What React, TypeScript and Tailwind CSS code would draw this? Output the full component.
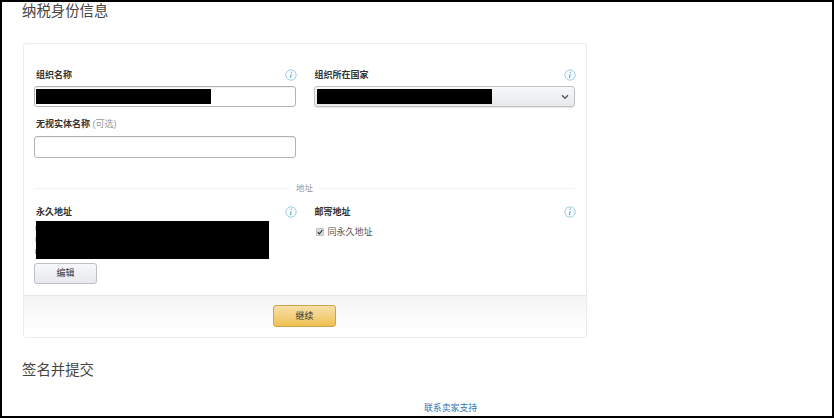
const font = { fontFamily: '"Liberation Sans", "Noto Sans CJK SC", sans-serif' };

function Info() {
  return (
    <svg width="12" height="12" viewBox="0 0 12 12" className="shrink-0 -mr-[1px]">
      <circle cx="6" cy="6" r="5.2" fill="#f6fbfd" stroke="#a6cde0" strokeWidth="1" />
      <path d="M6.4 2.8v1.1M6.1 5.2 5.5 9" stroke="#5a9abd" strokeWidth="1" fill="none" />
    </svg>
  );
}

function LabelInfo({ text, left }: { text: string; left: boolean }) {
  return (
    <div className="flex items-center justify-between h-[12px]">
      <span className={left ? "ml-[2px] text-[9px] font-bold leading-[12px] text-[#333]" : "ml-[1px] text-[9px] font-bold leading-[12px] text-[#333]"}>
        {text}
      </span>
      <Info />
    </div>
  );
}

export default function App() {
  return (
    <div
      style={font}
      className="w-[834px] h-[418px] bg-white border-t-2 border-l-2 border-r-2 border-b-2 border-black overflow-hidden flex flex-col pl-[21px] box-border"
    >
      <h1 className="-ml-[1px] text-[14.4px] font-normal leading-[18px] text-[#444]">纳税身份信息</h1>
      <div className="mt-[23px] w-[564px] h-[295px] border border-[#ececec] rounded-[3px] flex flex-col shrink-0">
        <div className="h-[251px] px-[10px] pt-[25px] shrink-0">
          <div className="grid grid-cols-2 gap-x-[18px] w-[541px]">
            <div className="flex flex-col">
              <LabelInfo text="组织名称" left />
              <div className="mt-[5px] h-[21px] border border-[#b2b2b2] rounded-[3px] bg-white p-[1px] shadow-[inset_0_1px_1px_rgba(0,0,0,0.06)]">
                <div className="w-[175px] h-[15px] bg-black mt-[1px]" />
              </div>
              <div className="mt-[11px] h-[12px] flex items-center">
                <span className="ml-[2px] text-[9px] font-bold leading-[12px] text-[#333]">
                  无视实体名称
                  <span className="font-normal text-[#999]"> (可选)</span>
                </span>
              </div>
              <div className="mt-[6px] h-[22px] border border-[#b2b2b2] rounded-[3px] bg-white shadow-[inset_0_1px_1px_rgba(0,0,0,0.06)]" />
            </div>
            <div className="flex flex-col">
              <LabelInfo text="组织所在国家" left={false} />
              <div className="mt-[5px] h-[21px] border border-[#c2c2c2] rounded-[3px] bg-gradient-to-b from-[#f7f8fa] to-[#e7e9ec] flex items-center justify-between pl-[2px] pr-[5px] shadow-[0_1px_1px_rgba(0,0,0,0.1)]">
                <div className="w-[175px] h-[15px] bg-black" />
                <svg width="8" height="6" viewBox="0 0 8 6">
                  <path d="M1 1.2 4 4.2 7 1.2" stroke="#555" strokeWidth="1.4" fill="none" />
                </svg>
              </div>
            </div>
          </div>
          <div className="mt-[23px] w-[541px] flex items-center gap-[6px] h-[14px]">
            <div className="flex-1 h-[1px] bg-[#f2f2f2]" />
            <span className="text-[8.5px] leading-[14px] text-[#999]">地址</span>
            <div className="flex-1 h-[1px] bg-[#f2f2f2]" />
          </div>
          <div className="mt-[11px] grid grid-cols-2 gap-x-[18px] w-[541px]">
            <div className="flex flex-col">
              <LabelInfo text="永久地址" left />
              <div className="mt-[3px] flex h-[38px]">
                <div className="w-[2px] flex flex-col justify-around items-end py-[2px]">
                  <div className="w-[1px] h-[5px] bg-[#e3c98a]" />
                  <div className="w-[1px] h-[5px] bg-[#e3c98a]" />
                  <div className="w-[1px] h-[5px] bg-[#c99a9a]" />
                </div>
                <div className="w-[233px] bg-black" />
              </div>
              <button className="mt-[4px] w-[63px] h-[21px] border border-[#bcc0c6] rounded-[3px] bg-gradient-to-b from-[#f7f8fa] to-[#e7e9ec] text-[9px] leading-[19px] text-[#333]">
                编辑
              </button>
            </div>
            <div className="flex flex-col">
              <LabelInfo text="邮寄地址" left={false} />
              <label className="mt-[8px] ml-[2px] flex items-center gap-[4px] text-[9px] leading-[12px] text-[#555]">
                <span className="w-[8px] h-[8px] rounded-[1px] bg-[#d9d9d9] border border-[#c4c4c4] flex items-center justify-center">
                  <svg width="6" height="6" viewBox="0 0 6 6">
                    <path d="M.8 3.2 2.4 4.8 5.4 1" stroke="#333" strokeWidth="1.2" fill="none" />
                  </svg>
                </span>
                同永久地址
              </label>
            </div>
          </div>
        </div>
        <div className="flex-1 border-t border-[#e6e6e6] rounded-b-[3px] bg-gradient-to-b from-[#f3f3f3] via-[#fbfbfb] to-white flex items-start justify-center pt-[9px] pr-[1px]">
          <button className="w-[63px] h-[22px] border border-[#c9a54e] rounded-[3px] bg-gradient-to-b from-[#f7e0a8] to-[#efc04e] text-[9px] leading-[20px] text-[#333]">
            继续
          </button>
        </div>
      </div>
      <h2 className="-ml-[1px] mt-[23px] text-[14.4px] font-normal leading-[18px] text-[#444]">签名并提交</h2>
      <a className="mt-[23px] ml-[401px] text-[8.9px] leading-[12px] text-[#2f78b5]">联系卖家支持</a>
    </div>
  );
}
